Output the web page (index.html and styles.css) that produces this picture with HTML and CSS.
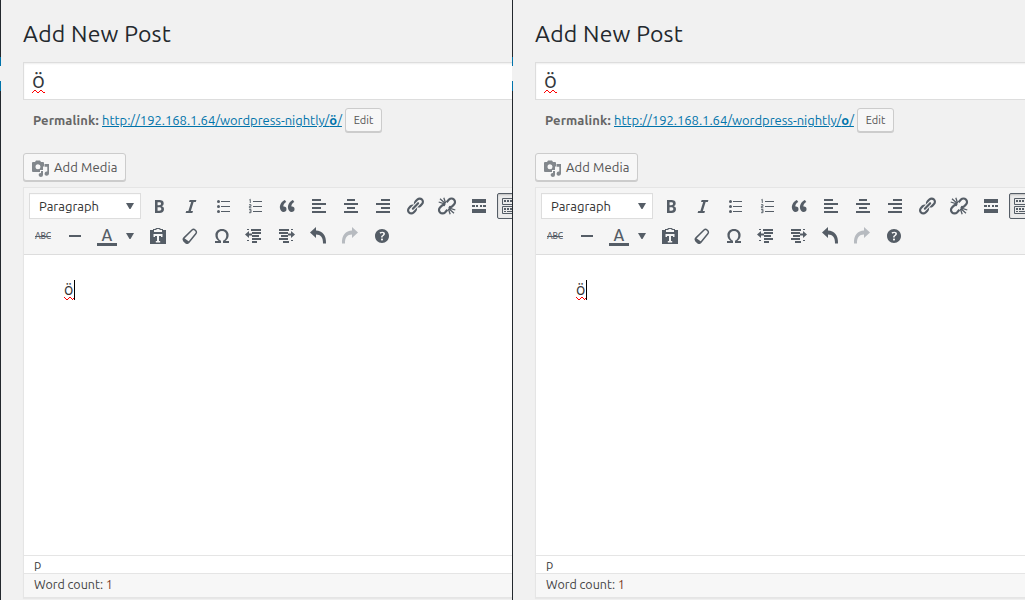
FILE: index.html
```html
<!DOCTYPE html>
<html lang="en">
<head>
<meta charset="utf-8">
<title>Add New Post</title>
<link rel="stylesheet" href="styles.css">
</head>
<body>
<svg class="sprite" aria-hidden="true">
  <symbol id="media" viewBox="0 0 18 18"><path fill-rule="evenodd" d="M1 2h2l1-1.500h4L9 2h2a1 1 0 0 1 1 1v3.500h-1V10H8v2H1a1 1 0 0 1-1-1V3a1 1 0 0 1 1-1zM6 4.300a2.500 2.500 0 1 0 0 5 2.500 2.500 0 0 0 0-5z"/><path d="M12.500 4H17v9.500a2.200 2.100 0 1 1-1.700-2V6.700h-2.800zM9 11h2v4a2.200 2 0 1 1-2-2z"/></symbol>
  <symbol id="bold" viewBox="0 0 20 20"><path d="M6 4v13h4.540c1.370 0 2.460-.33 3.260-1 .8-.66 1.200-1.580 1.200-2.770 0-.84-.17-1.510-.51-2.010s-.9-.85-1.670-1.030v-.09c.57-.1 1.020-.4 1.360-.9s.51-1.130.51-1.910c0-1.140-.39-1.980-1.170-2.500C12.750 4.260 11.500 4 9.780 4H6zm2.570 5.150V6.260h1.360c.73 0 1.270.11 1.610.32.34.22.51.58.51 1.070 0 .54-.16.92-.47 1.150s-.82.35-1.510.35h-1.500zm0 2.190h1.600c1.440 0 2.160.53 2.160 1.610 0 .6-.17 1.050-.51 1.340s-.86.43-1.570.43H8.570v-3.380z"/></symbol>
  <symbol id="italic" viewBox="0 0 20 20"><path d="M14.780 6h-2.130l-2.800 9h2.120l-.62 2H4.600l.62-2h2.140l2.800-9H8.030l.62-2h6.750z"/></symbol>
  <symbol id="ul" viewBox="0 0 20 20"><path d="M8 5h9v1H8zM8 10h9v1H8zM8 15h9v1H8z"/><circle cx="5.500" cy="5.500" r="1.500"/><circle cx="5.500" cy="10.500" r="1.500"/><circle cx="5.500" cy="15.500" r="1.500"/></symbol>
  <symbol id="ol" viewBox="0 0 20 20"><path d="M8 5h9v1H8zM8 10h9v1H8zM8 15h9v1H8z"/><path class="line" stroke-width=".9" d="M4.300 4l1-.7V7M4 8.700h2v1.600H4.400v1.500h2M4 13.400h2v3.300H4M4.500 15H6"/></symbol>
  <symbol id="quote" viewBox="0 0 20 20"><path d="M9.490 13.220c0-.74-.2-1.380-.61-1.900-.62-.78-1.830-.88-2.530-.72-.29-1.650 1.110-3.750 2.920-4.650L7.880 4c-2.730 1.300-5.420 4.280-4.960 8.050C3.210 14.430 4.590 16 6.540 16c.85 0 1.560-.25 2.120-.75s.83-1.180.83-2.030zm8.050 0c0-.74-.2-1.380-.61-1.900-.63-.78-1.830-.88-2.530-.72-.29-1.650 1.110-3.750 2.920-4.650L15.930 4c-2.730 1.300-5.410 4.280-4.950 8.050.29 2.380 1.660 3.950 3.610 3.950.85 0 1.560-.25 2.120-.75s.83-1.180.83-2.030z"/></symbol>
  <symbol id="left" viewBox="0 0 20 20"><path d="M3 3h9v2H3zM3 7h14v2H3zM3 11h9v2H3zM3 15h14v2H3z"/></symbol>
  <symbol id="center" viewBox="0 0 20 20"><path d="M6 3h8v2H6zM3 7h14v2H3zM6 11h8v2H6zM3 15h14v2H3z"/></symbol>
  <symbol id="right" viewBox="0 0 20 20"><path d="M8 3h9v2H8zM3 7h14v2H3zM8 11h9v2H8zM3 15h14v2H3z"/></symbol>
  <symbol id="link" viewBox="0 0 20 20"><path d="M17.740 2.760c1.680 1.690 1.680 4.410 0 6.100l-1.530 1.520c-1.120 1.120-2.700 1.470-4.140 1.090l2.620-2.610.76-.77.76-.76c.84-.84.84-2.200 0-3.040-.84-.85-2.200-.85-3.040 0l-.77.76-3.380 3.380c-.37-1.440-.02-3.020 1.100-4.140l1.520-1.530c1.690-1.680 4.420-1.680 6.100 0zM8.590 13.430l5.340-5.340c.42-.42.42-1.100 0-1.520-.44-.43-1.130-.39-1.530 0l-5.330 5.340c-.42.42-.42 1.100 0 1.520.44.43 1.130.39 1.520 0zm-.76 2.290l4.140-4.150c.38 1.440.03 3.020-1.090 4.140l-1.520 1.530c-1.690 1.680-4.410 1.680-6.100 0-1.680-1.680-1.680-4.420 0-6.100l1.530-1.520c1.120-1.120 2.700-1.470 4.140-1.100l-4.140 4.150c-.85.84-.85 2.200 0 3.050.84.84 2.200.84 3.040 0z"/></symbol>
  <symbol id="unlink" viewBox="0 0 20 20"><path class="line" stroke-width="2.200" d="M9.600 6.200l2.400-2.600a3.450 3.450 0 0 1 5 4.900l-1.900 1.900c-1 .8-2.200.9-3.200.4M10.400 13.800L8 16.400a3.450 3.450 0 0 1-5-4.900l1.900-1.900c1-.8 2.200-.9 3.200-.4"/><path class="line" stroke-width="1.300" d="M8.300 8.200L1.700 6M8.300 7.500L3 2.800M8.700 7.200L6.800 1.800M11.700 11.800l6.600 2.200M11.700 12.500l5.300 4.700M11.300 12.800l1.900 5.400"/></symbol>
  <symbol id="more" viewBox="0 0 20 20"><path d="M3 3h14v4H3zM3 9h3v2H3zM7 9h2v2H7zM11 9h2v2h-2zM14 9h3v2h-3zM3 13h14v4H3z"/></symbol>
  <symbol id="sink" viewBox="0 0 20 20"><path class="line" d="M1.500 2.500h17v6h-17zM1.500 10.500h17v7h-17z"/><path d="M3 4h2v2H3zM6 4h2v2H6zM9 4h2v2H9zM12 4h2v2h-2zM15 4h2v2h-2zM3 12h2v2H3zM6 12h2v2H6zM9 12h2v2H9zM12 12h2v2h-2zM15 12h2v2h-2zM3 15h2v1H3zM6 15h8v1H6z"/></symbol>
  <symbol id="hr" viewBox="0 0 20 20"><path d="M4 9h12v2H4z"/></symbol>
  <symbol id="caret" viewBox="0 0 8 6"><path d="M0 0h8L4.500 6h-1z"/></symbol>
  <symbol id="paste" viewBox="0 0 20 20"><path fill-rule="evenodd" d="M2 4h3V3h2l1.300-1h3.400L13 3h2v1h3v14H2zM6 4v2h8V4h-2l-1-1H9L8 4zM5.500 8v3H7v-1h2v5H7.800v1.500h4.400V15H11v-5h2v1h1.500V8z"/></symbol>
  <symbol id="eraser" viewBox="0 0 20 20"><path class="line" stroke-width="1.500" stroke-linejoin="round" d="M12 4c.8-.8 2.200-.8 3 0l.8.800c.8.800.8 2.200 0 3l-7.100 8.700c-.8.800-2 .8-2.800 0L4 14.700c-.8-.8-.8-2 0-2.800z"/><path d="M4 11.900l5.300 3.900-1.400 1.700c-.8.500-1.900.4-2.600-.2l-1.800-1.800c-.7-.9-.6-1.800 0-2.800z"/></symbol>
  <symbol id="omega" viewBox="0 0 20 20"><path d="M10 3c4 0 6.600 2.600 6.600 6.100 0 2.700-1.200 4.700-3.200 5.900H17v2h-6v-2.300c2-1 3.300-2.900 3.300-5.300C14.300 6.700 12.700 5 10 5S5.700 6.700 5.700 9.400c0 2.400 1.300 4.300 3.300 5.300V17H3v-2h3.600c-2-1.200-3.200-3.200-3.200-5.900C3.400 5.600 6 3 10 3z"/></symbol>
  <symbol id="outdent" viewBox="0 0 20 20"><path d="M3 3h2v1H3zM7 3h10v2H7zM8 6h9v2H8zM8 9h7v2H8zM8 12h9v2H8zM8 15h5v2H8zM3 14h2v1H3zM1 8.500L5 5v2.500h3v2H5V12z"/></symbol>
  <symbol id="indent" viewBox="0 0 20 20"><path d="M3 3h10v2H3zM3 6h9v2H3zM5 9h7v2H5zM3 12h9v2H3zM7 15h6v2H7zM15 3h2v1h-2zM15 14h2v1h-2zM19 8.500L15 5v2.500h-3v2h3V12z"/></symbol>
  <symbol id="undo" viewBox="0 0 20 20"><path d="M8 1v3.500c6.200 0 10.500 5 10 13h-3c.2-6-2.300-9-7-9V12L2 6.500z"/></symbol>
  <symbol id="help" viewBox="0 0 20 20"><path d="M17 10c0-3.870-3.140-7-7-7-3.870 0-7 3.130-7 7s3.130 7 7 7c3.860 0 7-3.130 7-7zm-6.300 1.480H9.140v-.43c0-.38.08-.7.24-.98s.46-.57.88-.89c.41-.29.68-.53.81-.71.14-.18.2-.39.2-.62 0-.25-.09-.44-.28-.58-.19-.13-.45-.19-.79-.19-.58 0-1.250.19-2 .57l-.64-1.280c.87-.49 1.800-.74 2.770-.74.81 0 1.450.2 1.920.58.48.39.71.91.71 1.550 0 .43-.09.8-.29 1.110-.19.32-.57.67-1.110 1.060-.38.28-.61.49-.71.63-.1.15-.15.34-.15.57v.35zm-1.470 2.740c-.18-.17-.27-.42-.27-.73 0-.33.08-.58.26-.75s.43-.25.77-.25c.32 0 .57.09.75.26s.27.42.27.740c0 .3-.09.55-.27.72-.18.18-.43.27-.75.27-.33 0-.58-.09-.76-.26z"/></symbol>
  <symbol id="wave" viewBox="0 0 13 3"><path class="wave-line" d="M0 2h1v1H0zM1 1h1v1H1zM2 0h2v1H2zM4 1h1v1H4zM5 2h2v1H5zM7 1h1v1H7zM8 0h2v1H8zM10 1h1v1h-1zM11 2h2v1h-2z"/></symbol>
  <symbol id="wave-short" viewBox="0 0 10 3"><path class="wave-line" d="M0 0h1v1H0zM1 1h1v1H1zM2 2h2v1H2zM4 1h1v1H4zM5 0h2v1H5zM7 1h1v1H7zM8 2h1v1H8zM9 1h1v1H9z"/></symbol>
</svg>

<main class="compare">
  <section class="panel">
    <h1 class="heading">Add New Post</h1>
    <div class="title-field"><span class="typed">ö<svg class="wave"><use href="#wave"/></svg></span></div>
    <div class="permalink"><strong class="permalink-label">Permalink:</strong><a class="url" href="#">http://192.168.1.64/wordpress-nightly/<b>ö</b>/</a><button class="button small">Edit</button></div>
    <button class="button media"><svg class="media-icon"><use href="#media"/></svg>Add Media</button>
    <div class="editor">
      <div class="toolbar">
        <div class="row">
          <div class="select"><span>Paragraph</span><svg class="caret"><use href="#caret"/></svg></div>
          <span class="tool"><svg><use href="#bold"/></svg></span><span class="tool"><svg><use href="#italic"/></svg></span><span class="tool"><svg><use href="#ul"/></svg></span><span class="tool"><svg><use href="#ol"/></svg></span><span class="tool"><svg><use href="#quote"/></svg></span><span class="tool"><svg><use href="#left"/></svg></span><span class="tool"><svg><use href="#center"/></svg></span><span class="tool"><svg><use href="#right"/></svg></span><span class="tool"><svg><use href="#link"/></svg></span><span class="tool"><svg><use href="#unlink"/></svg></span><span class="tool"><svg><use href="#more"/></svg></span><span class="tool active"><svg><use href="#sink"/></svg></span>
        </div>
        <div class="row">
          <span class="tool"><s class="strike">ABC</s></span><span class="tool"><svg><use href="#hr"/></svg></span><span class="tool"><span class="color">A</span></span><span class="tool narrow"><svg class="caret"><use href="#caret"/></svg></span><span class="tool"><svg><use href="#paste"/></svg></span><span class="tool"><svg><use href="#eraser"/></svg></span><span class="tool"><svg><use href="#omega"/></svg></span><span class="tool"><svg><use href="#outdent"/></svg></span><span class="tool"><svg><use href="#indent"/></svg></span><span class="tool"><svg><use href="#undo"/></svg></span><span class="tool disabled"><svg class="flip"><use href="#undo"/></svg></span><span class="tool"><svg><use href="#help"/></svg></span>
        </div>
      </div>
      <div class="content"><span class="typed caret-after">ö<svg class="wave"><use href="#wave-short"/></svg></span></div>
      <div class="path">p</div>
      <div class="status">Word count: <span class="count">1</span></div>
    </div>
  </section>

  <section class="panel">
    <h1 class="heading">Add New Post</h1>
    <div class="title-field"><span class="typed">ö<svg class="wave"><use href="#wave"/></svg></span></div>
    <div class="permalink"><strong class="permalink-label">Permalink:</strong><a class="url" href="#">http://192.168.1.64/wordpress-nightly/<b>o</b>/</a><button class="button small">Edit</button></div>
    <button class="button media"><svg class="media-icon"><use href="#media"/></svg>Add Media</button>
    <div class="editor">
      <div class="toolbar">
        <div class="row">
          <div class="select"><span>Paragraph</span><svg class="caret"><use href="#caret"/></svg></div>
          <span class="tool"><svg><use href="#bold"/></svg></span><span class="tool"><svg><use href="#italic"/></svg></span><span class="tool"><svg><use href="#ul"/></svg></span><span class="tool"><svg><use href="#ol"/></svg></span><span class="tool"><svg><use href="#quote"/></svg></span><span class="tool"><svg><use href="#left"/></svg></span><span class="tool"><svg><use href="#center"/></svg></span><span class="tool"><svg><use href="#right"/></svg></span><span class="tool"><svg><use href="#link"/></svg></span><span class="tool"><svg><use href="#unlink"/></svg></span><span class="tool"><svg><use href="#more"/></svg></span><span class="tool active"><svg><use href="#sink"/></svg></span>
        </div>
        <div class="row">
          <span class="tool"><s class="strike">ABC</s></span><span class="tool"><svg><use href="#hr"/></svg></span><span class="tool"><span class="color">A</span></span><span class="tool narrow"><svg class="caret"><use href="#caret"/></svg></span><span class="tool"><svg><use href="#paste"/></svg></span><span class="tool"><svg><use href="#eraser"/></svg></span><span class="tool"><svg><use href="#omega"/></svg></span><span class="tool"><svg><use href="#outdent"/></svg></span><span class="tool"><svg><use href="#indent"/></svg></span><span class="tool"><svg><use href="#undo"/></svg></span><span class="tool disabled"><svg class="flip"><use href="#undo"/></svg></span><span class="tool"><svg><use href="#help"/></svg></span>
        </div>
      </div>
      <div class="content"><span class="typed caret-after">ö<svg class="wave"><use href="#wave-short"/></svg></span></div>
      <div class="path">p</div>
      <div class="status">Word count: <span class="count">1</span></div>
    </div>
  </section>
</main>
</body>
</html>
```
FILE: styles.css
```css
* { box-sizing: border-box; }
body {
  margin: 0;
  background: #f1f1f1;
  color: #444;
  font: 13px/18px Ubuntu, "Open Sans", sans-serif;
}
.sprite { position: absolute; width: 0; height: 0; }
.compare {
  display: grid;
  grid-template-columns: 512px 513px;
  height: 600px;
  overflow: hidden;
}
.panel {
  display: flex;
  flex-direction: column;
  align-items: flex-start;
  height: 600px;
  padding: 19px 0 0 23px;
  overflow: hidden;
  background: linear-gradient(#23282d 57px, #0073aa 57px 66px, #f1f1f1 66px 81px, #0073aa 81px 91px, #23282d 91px) 0 0 / 1px 600px no-repeat;
}
.heading {
  margin: 0 0 13px;
  color: #23282d;
  font-size: 23px;
  font-weight: 400;
  line-height: 30px;
  letter-spacing: .23px;
}
.title-field {
  width: 520px;
  height: 38px;
  padding: 0 8px;
  border: 1px solid #ddd;
  background: #fff;
  box-shadow: inset 0 1px 2px rgba(0, 0, 0, .07);
  color: #32373c;
  font-size: 22px;
  line-height: 34px;
}
.typed { position: relative; display: inline-block; }
.wave {
  position: absolute;
  left: 0;
  bottom: 4px;
  width: 13px;
  height: 3px;
}
.wave-line { fill: #f00; }
.permalink {
  display: flex;
  align-items: center;
  height: 24px;
  margin: 8px 0 21px 10px;
  color: #666;
}
.permalink-label { width: 69px; letter-spacing: .08px; }
.url { width: 240px; color: #0073aa; white-space: nowrap; letter-spacing: -.02px; }
.button {
  display: flex;
  align-items: center;
  flex: none;
  border: 1px solid #ccc;
  border-radius: 3px;
  background: #f7f7f7;
  box-shadow: 0 1px 0 #ccc;
  color: #555;
  font: inherit;
}
.small {
  justify-content: center;
  width: 37px;
  height: 24px;
  margin-left: 3px;
  padding: 0;
  font-size: 11px;
}
.media {
  width: 103px;
  height: 28px;
  gap: 4px;
  padding: 0 0 0 8px;
  letter-spacing: .1px;
  white-space: nowrap;
}
.media-icon { width: 18px; height: 18px; margin-top: 3px; fill: #82878c; }
.editor {
  width: 520px;
  margin-top: 6px;
  border: 1px solid #e5e5e5;
  box-shadow: 0 1px 1px rgba(0, 0, 0, .04);
}
.toolbar {
  height: 67px;
  padding: 3px;
  border-bottom: 1px solid #ddd;
  background: #f5f5f5;
}
.row { display: flex; height: 30px; align-items: center; }
.select {
  display: flex;
  align-items: center;
  justify-content: space-between;
  flex: none;
  width: 112px;
  height: 26px;
  margin: 0 2px;
  padding: 0 6px 0 9px;
  border: 1px solid #ddd;
  background: #fff;
  color: #333;
  box-shadow: inset 0 1px 1px -1px rgba(0, 0, 0, .2);
}
.tool {
  display: flex;
  align-items: center;
  justify-content: center;
  flex: none;
  width: 32px;
  height: 26px;
  color: #555d66;
}
.tool svg { flex: none; width: 20px; height: 20px; fill: currentColor; }
.narrow { width: 19px; padding-right: 5px; }
svg.caret, .tool svg.caret { flex: none; width: 8px; height: 6px; fill: #555d66; }
.line { fill: none; stroke: currentColor; }
.active {
  width: 28px;
  margin-left: 2px;
  border: 1px solid #555d66;
  border-radius: 2px;
  background: #ebebeb;
  box-shadow: inset 0 1px 2px rgba(0, 0, 0, .2);
}
.disabled { color: #b7bbc0; }
.flip { transform: scaleX(-1); }
.strike { font-size: 8.5px; font-weight: 500; line-height: 10px; letter-spacing: -.2px; }
.color {
  width: 20px;
  height: 18px;
  margin-top: 2px;
  border-bottom: 3px solid #555d66;
  font-size: 16px;
  font-weight: 500;
  line-height: 15px;
  text-align: center;
}
.content {
  height: 300px;
  padding: 25px 40px;
  background: #fff;
  color: #333;
  font-size: 16px;
  line-height: 19px;
}
.caret-after { width: 11px; height: 20px; border-right: 1px solid #000; }
.caret-after .wave { bottom: 0; width: 10px; height: 3px; }
.path {
  height: 18px;
  padding-left: 10px;
  border-top: 1px solid #e5e5e5;
  background: #fff;
  font-size: 12.5px;
  line-height: 17px;
}
.status {
  height: 24px;
  padding-left: 10px;
  border-top: 1px solid #e5e5e5;
  background: #f7f7f7;
  font-size: 12.5px;
  line-height: 21px;
}
.count { color: #7a3a22; }
```
